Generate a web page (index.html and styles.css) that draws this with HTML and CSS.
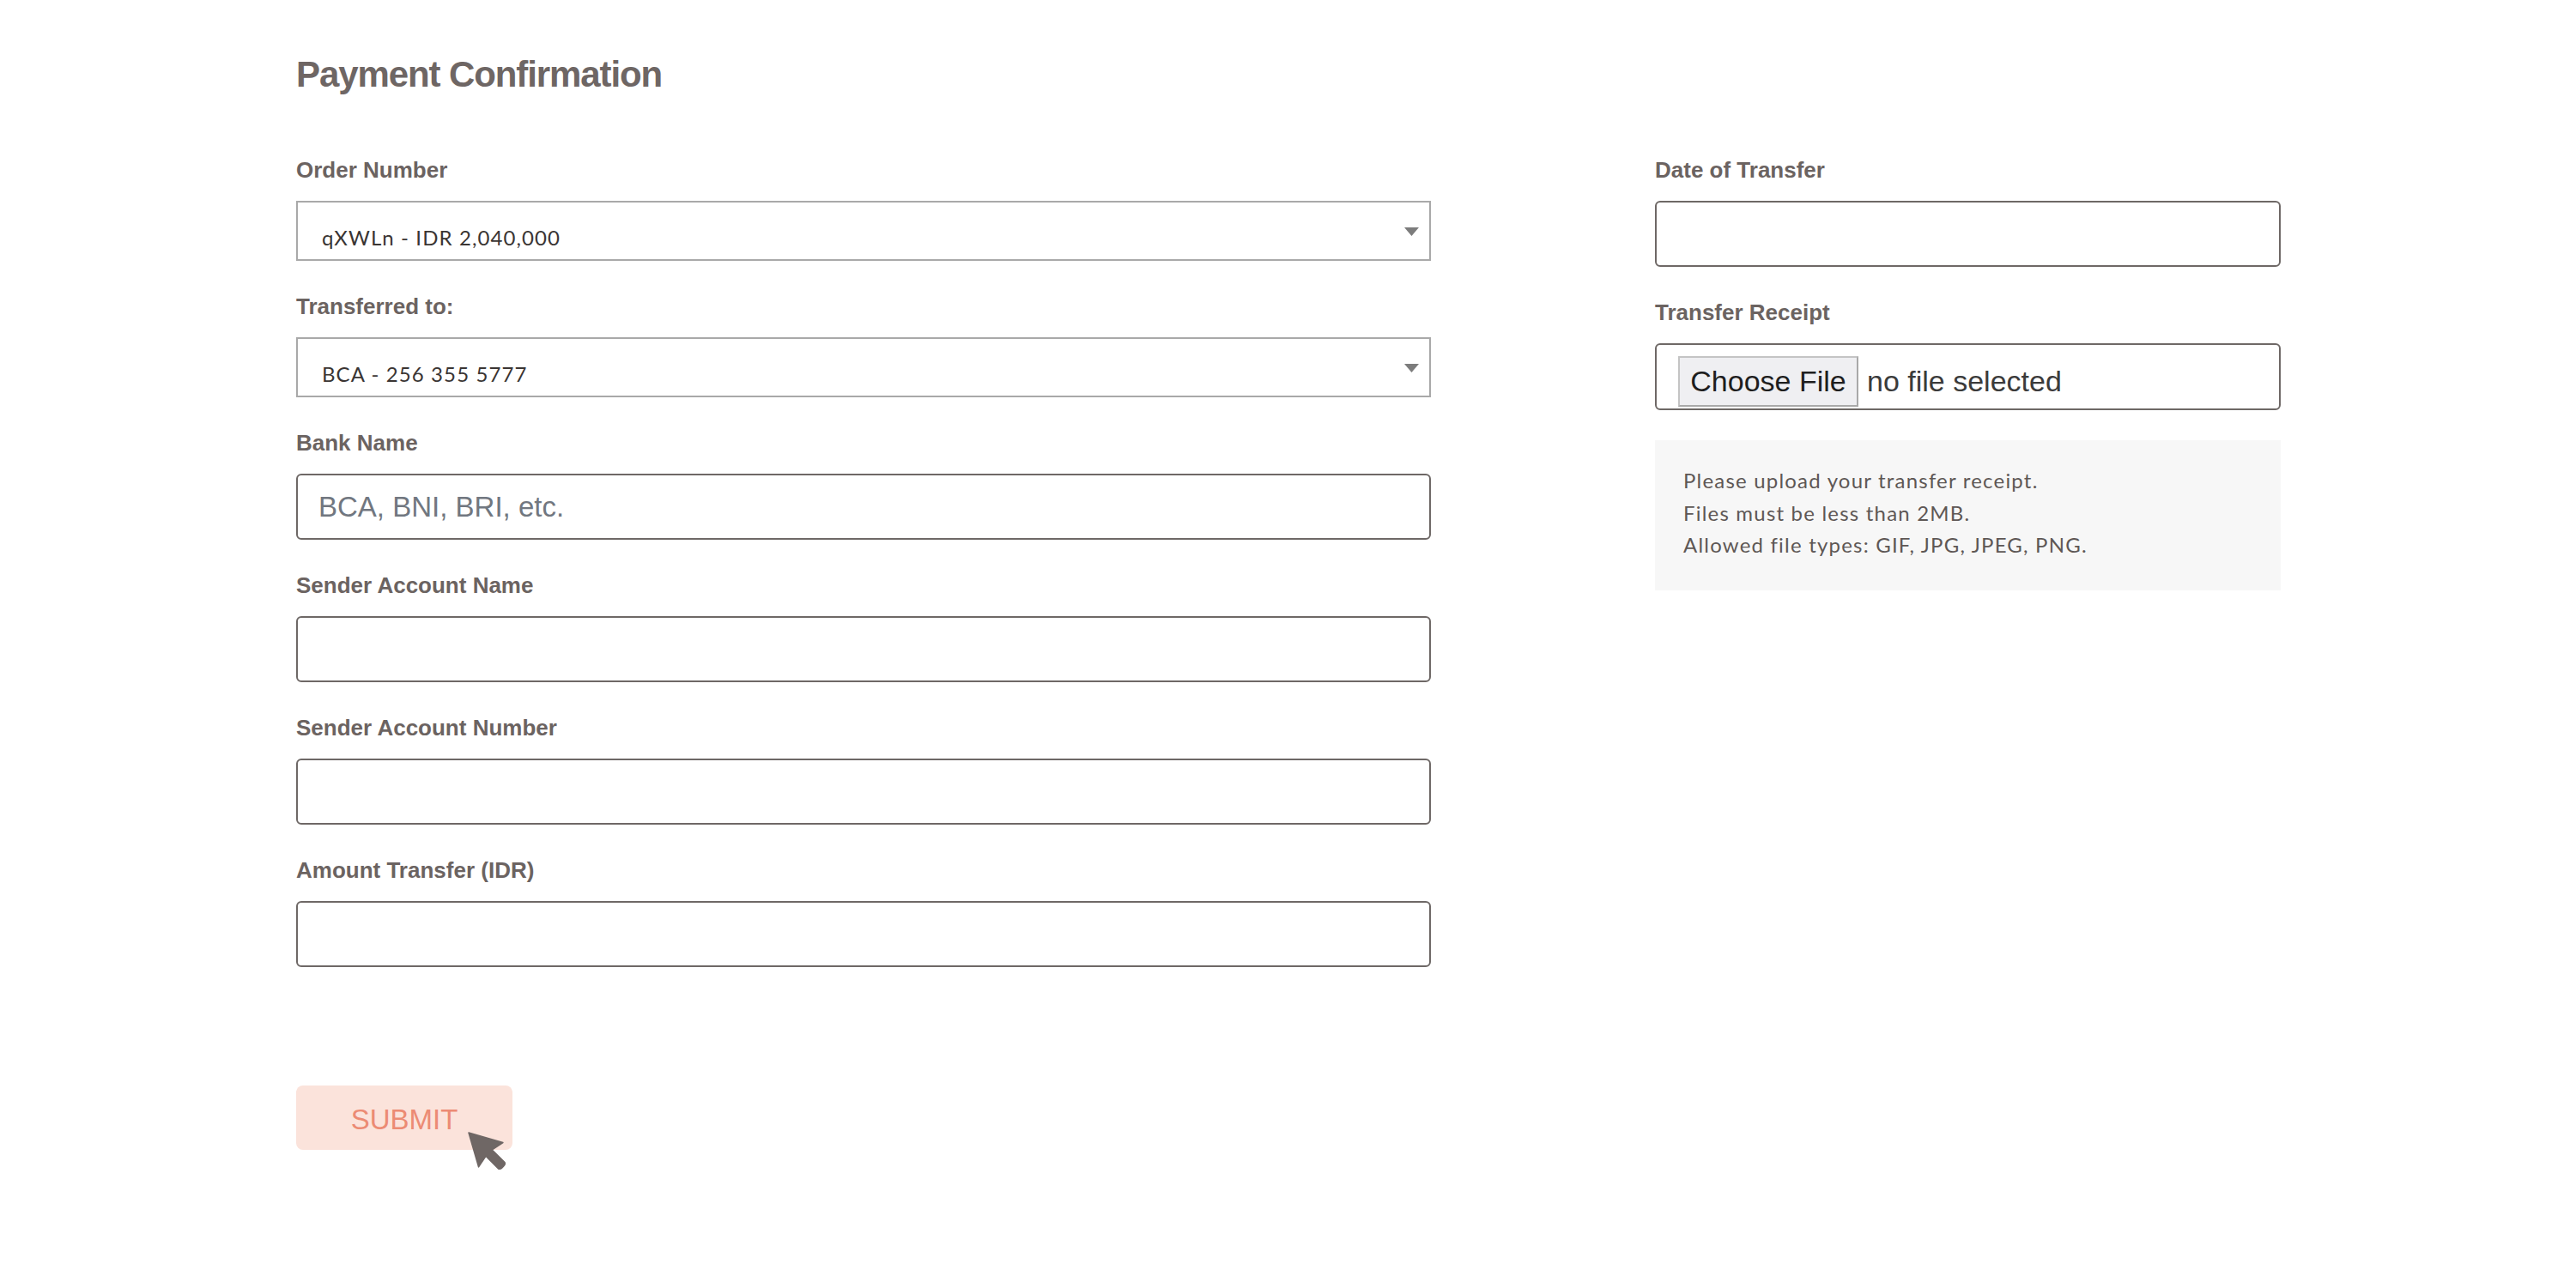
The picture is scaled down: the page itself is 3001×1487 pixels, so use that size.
FILE: index.html
```html
<!DOCTYPE html>
<html lang="en">
<head>
<meta charset="utf-8">
<title>Payment Confirmation</title>
<link rel="stylesheet" href="styles.css">
</head>
<body>
<main class="page">
  <h1 class="title">Payment Confirmation</h1>
  <form class="form">
    <div class="col col-left">
      <div class="field">
        <label class="label">Order Number</label>
        <div class="select-wrap">
          <select class="select"><option>qXWLn - IDR 2,040,000</option></select>
          <svg class="select-arrow" viewBox="0 0 17 10"><path d="M0 0H17L8.5 10Z"/></svg>
        </div>
      </div>
      <div class="field">
        <label class="label">Transferred to:</label>
        <div class="select-wrap">
          <select class="select"><option>BCA - 256 355 5777</option></select>
          <svg class="select-arrow" viewBox="0 0 17 10"><path d="M0 0H17L8.5 10Z"/></svg>
        </div>
      </div>
      <div class="field">
        <label class="label">Bank Name</label>
        <input class="input" type="text" placeholder="BCA, BNI, BRI, etc.">
      </div>
      <div class="field">
        <label class="label">Sender Account Name</label>
        <input class="input" type="text">
      </div>
      <div class="field">
        <label class="label">Sender Account Number</label>
        <input class="input" type="text">
      </div>
      <div class="field">
        <label class="label">Amount Transfer (IDR)</label>
        <input class="input" type="text">
      </div>
    </div>
    <div class="col col-right">
      <div class="field">
        <label class="label">Date of Transfer</label>
        <input class="input" type="text">
      </div>
      <div class="field">
        <label class="label">Transfer Receipt</label>
        <div class="file-box">
          <span class="file-btn">Choose File</span>
          <span class="file-name">no file selected</span>
        </div>
      </div>
      <div class="info">
        <p>Please upload your transfer receipt.</p>
        <p>Files must be less than 2MB.</p>
        <p>Allowed file types: GIF, JPG, JPEG, PNG.</p>
      </div>
    </div>
  </form>
  <div class="submit-wrap">
    <button class="submit" type="button">SUBMIT</button>
    <svg class="cursor" viewBox="0 0 42 42"><path d="M1 1L39 12L27 20L41 34Q42 36 40 38L38 40Q36 42 34 41L20 27L12 39Z"/></svg>
  </div>
</main>
</body>
</html>
```
FILE: styles.css
```css
html, body {
  margin: 0;
  padding: 0;
  background: #ffffff;
}

.page {
  padding: 66px 0 140px 345px;
  font-family: "Liberation Sans", Arial, sans-serif;
  color: #6b6361;
}

.title {
  margin: 0 0 77px 0;
  font-size: 42px;
  line-height: 1;
  font-weight: 700;
  letter-spacing: -1.1px;
  color: #6e6664;
}

.form {
  display: flex;
  gap: 261px;
  align-items: flex-start;
}

.col {
  display: flex;
  flex-direction: column;
  gap: 40px;
}

.col-left {
  width: 1322px;
}

.col-right {
  width: 729px;
}

.field {
  display: flex;
  flex-direction: column;
}

.label {
  display: block;
  font-size: 26px;
  line-height: 1;
  font-weight: 700;
  margin-bottom: 23px;
  color: #6b6361;
}

.select-wrap {
  position: relative;
}

.select {
  appearance: none;
  -webkit-appearance: none;
  display: block;
  box-sizing: border-box;
  width: 100%;
  height: 70px;
  margin: 0;
  padding: 15px 28px 0 28px;
  border: 2px solid #a9a9a9;
  border-radius: 0;
  background: #ffffff;
  font-family: Lato, "Liberation Sans", sans-serif;
  font-size: 24px;
  letter-spacing: 1.1px;
  color: #3a3533;
}

.select-arrow {
  position: absolute;
  right: 14px;
  top: 31px;
  width: 17px;
  height: 10px;
  fill: #7c7c7c;
}

.input {
  display: block;
  box-sizing: border-box;
  width: 100%;
  height: 77px;
  margin: 0;
  padding: 0 24px;
  border: 2px solid #6e6866;
  border-radius: 6px;
  background: #ffffff;
  font-family: "Liberation Sans", Arial, sans-serif;
  font-size: 33px;
  color: #333;
}

.input::placeholder {
  color: #717780;
}

.file-box {
  box-sizing: border-box;
  height: 78px;
  border: 2px solid #6e6866;
  border-radius: 6px;
  padding: 13px 0 0 25px;
  display: flex;
  align-items: flex-start;
}

.file-btn {
  box-sizing: border-box;
  height: 59px;
  width: 210px;
  display: flex;
  align-items: center;
  justify-content: center;
  background: #efeff2;
  border: 2px solid #a9a9a9;
  border-top-color: #c4c4c4;
  border-left-color: #c4c4c4;
  font-family: "Liberation Sans", Arial, sans-serif;
  font-size: 34px;
  color: #1e1e1e;
}

.file-name {
  height: 59px;
  display: flex;
  align-items: center;
  margin-left: 10px;
  font-size: 34px;
  color: #3b3b3b;
}

.info {
  margin-top: -5px;
  background: #f7f7f7;
  padding: 28px 20px 34px 33px;
  font-family: Lato, "Liberation Sans", sans-serif;
  font-size: 24px;
  letter-spacing: 1.2px;
  line-height: 37.5px;
  color: #5e5755;
}

.info p {
  margin: 0;
}

.submit-wrap {
  position: relative;
  width: 252px;
  margin-top: 138px;
}

.submit {
  display: block;
  box-sizing: border-box;
  width: 252px;
  height: 75px;
  border: 0;
  border-radius: 8px;
  background: #fbe3db;
  font-family: "Liberation Sans", Arial, sans-serif;
  font-size: 33px;
  color: #ec8b74;
  padding: 4px 0 0 0;
}

.cursor {
  position: absolute;
  left: 200px;
  top: 54px;
  width: 44px;
  height: 44px;
  fill: #6f6765;
  stroke: #6f6765;
  stroke-width: 1.5;
  stroke-linejoin: round;
}
```
